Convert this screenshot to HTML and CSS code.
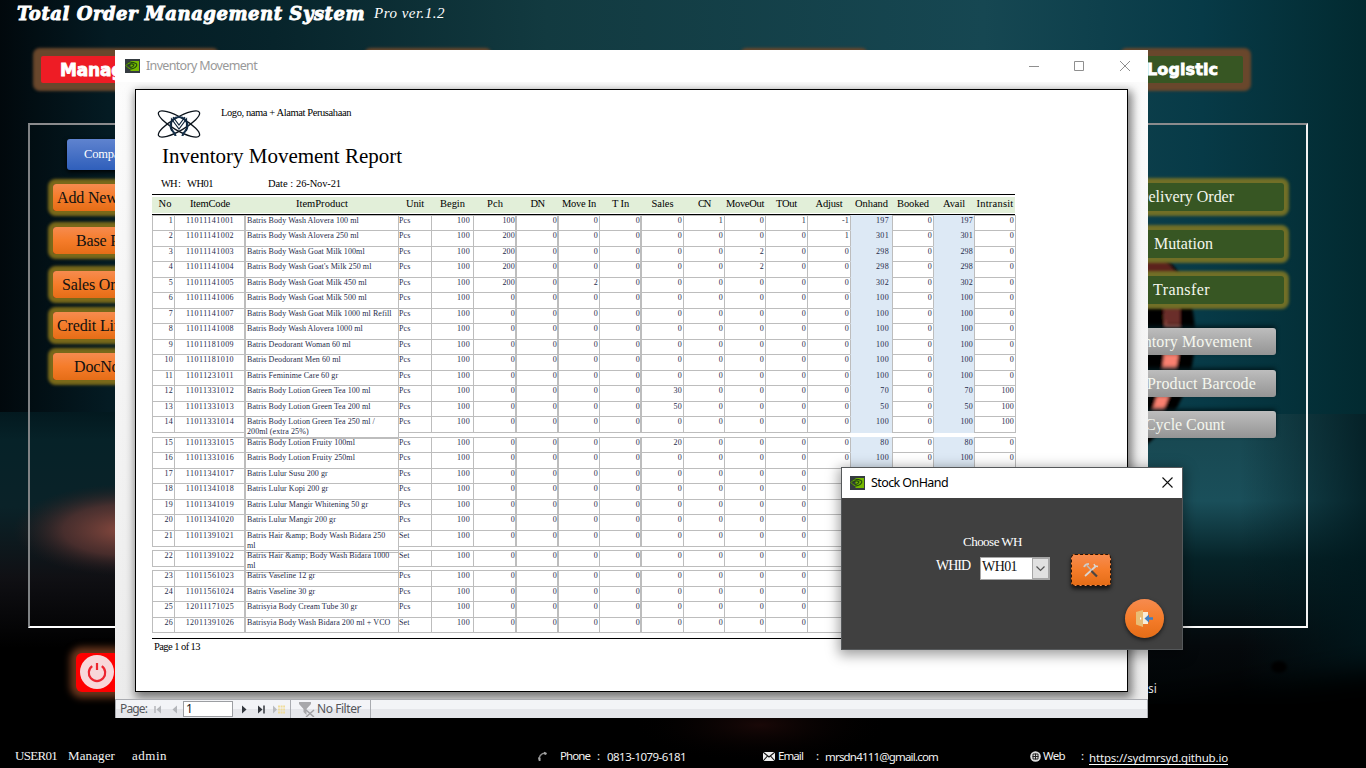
FILE: index.html
```html
<!DOCTYPE html>
<html lang="en">
<head>
<meta charset="utf-8">
<title>Total Order Management System</title>
<link rel="stylesheet" href="styles.css">
</head>
<body>
<div class="desktop">
  <svg class="backdrop" width="1366" height="768" viewBox="0 0 1366 768">
    <defs>
      <linearGradient id="sky" x1="0" x2="1" y1="0" y2="0">
        <stop offset="0" stop-color="#01080c"/><stop offset=".08" stop-color="#041b23"/><stop offset=".2" stop-color="#07242b"/>
        <stop offset=".4" stop-color="#123a40"/><stop offset=".72" stop-color="#164752"/><stop offset=".88" stop-color="#073a47"/>
        <stop offset="1" stop-color="#022a30"/>
      </linearGradient>
      <linearGradient id="leftFloor" x1="0" x2="0" y1="0" y2="1">
        <stop offset="0" stop-color="#03191f"/><stop offset=".12" stop-color="#062228"/><stop offset=".4" stop-color="#0a2228"/><stop offset=".7" stop-color="#101014"/><stop offset="1" stop-color="#000"/>
      </linearGradient>
      <linearGradient id="rightFloor" x1="0" x2="0" y1="0" y2="1">
        <stop offset="0" stop-color="#17464f"/><stop offset=".3" stop-color="#1a4f5a"/><stop offset=".5" stop-color="#062328"/><stop offset=".8" stop-color="#05090c"/><stop offset="1" stop-color="#000304"/>
      </linearGradient>
      <linearGradient id="rightEdge" x1="0" x2="1" y1="0" y2="0">
        <stop offset="0" stop-color="#00181d" stop-opacity="0"/><stop offset="1" stop-color="#00181d" stop-opacity=".8"/>
      </linearGradient>
      <radialGradient id="ember"><stop offset="0" stop-color="#8a4a3f"/><stop offset=".55" stop-color="#5b3431" stop-opacity=".75"/><stop offset="1" stop-color="#2a1c1e" stop-opacity="0"/></radialGradient>
      <radialGradient id="glow"><stop offset="0" stop-color="#190807"/><stop offset="1" stop-color="#000" stop-opacity="0"/></radialGradient>
      <filter id="soft"><feGaussianBlur stdDeviation="1.6"/></filter>
      <filter id="haze" x="-20%" y="-60%" width="140%" height="220%"><feGaussianBlur stdDeviation="14"/></filter>
    </defs>
    <rect width="1366" height="768" fill="#000"/>
    <rect width="1366" height="420" fill="url(#sky)"/>
    <rect y="412" width="700" height="236" fill="url(#leftFloor)"/>
    <rect x="700" y="414" width="666" height="290" fill="url(#rightFloor)"/>
    <ellipse cx="125" cy="530" rx="112" ry="46" fill="url(#ember)"/>
    <rect x="1240" y="414" width="126" height="290" fill="url(#rightEdge)"/>
    <path d="M1080 715L1400 665V800H1080z" fill="#000" filter="url(#haze)"/>
    <ellipse cx="760" cy="725" rx="130" ry="38" fill="url(#glow)"/>
    <ellipse cx="1279" cy="667" rx="8" ry="6" fill="#000" filter="url(#soft)"/>
    <g filter="url(#soft)">
      <path d="M1140 250C1180 250 1195 300 1195 335C1195 390 1168 430 1140 450z" fill="#030506"/>
      <path d="M1140 254C1158 252 1172 262 1180 282L1140 282z" fill="#5b241d"/>
      <path d="M1163 300L1178 300Q1186 358 1163 412L1152 412Q1170 358 1163 300z" fill="#f9806f"/>
      <path d="M1162 298L1180 298L1180 326L1166 326z" fill="#6b2f2a"/>
    </g>
  </svg>

  <header class="brand">
    <h1 class="brand-name" data-w="348">Total Order Management System</h1>
    <span class="brand-ver" data-w="71">Pro ver.1.2</span>
  </header>

  <nav class="tabs">
    <span class="tab tab-red">Manage</span>
    <span class="tab tab-hidden"></span>
    <span class="tab tab-hidden"></span>
    <span class="tab tab-green">Logistic</span>
  </nav>

  <main class="frame">
    <div class="col-left">
      <span class="btn btn-blue">Company</span>
      <span class="btn btn-orange pl4">Add New Item</span>
      <span class="btn btn-orange pl22">Base Price</span>
      <span class="btn btn-orange pl9 gap17">Sales Order</span>
      <span class="btn btn-orange pl4 gap12">Credit Limit</span>
      <span class="btn btn-orange pl20">DocNo</span>
    </div>
    <div class="col-right">
      <span class="btn btn-green"><span data-w="97">Delivery Order</span></span>
      <span class="btn btn-green pr71"><span data-w="59">Mutation</span></span>
      <span class="btn btn-green pr74"><span data-w="57">Transfer</span></span>
      <span class="btn btn-gray first"><span data-w="137">Inventory Movement</span></span>
      <span class="btn btn-gray pr20"><span data-w="145">Print Product Barcode</span></span>
      <span class="btn btn-gray pr51"><span data-w="80">Cycle Count</span></span>
    </div>
  </main>

  <section class="strip">
    <span class="power">
      <svg width="36" height="36" viewBox="0 0 36 36"><circle cx="18" cy="18" r="17" fill="#f8d7da"/><path d="M13.2 12.2a8.2 8.2 0 1 0 9.6 0M18 9v7" fill="none" stroke="#ed2530" stroke-width="2.2"/></svg>
    </span>
    <span class="version">si</span>
  </section>

  <footer class="status">
    <span class="user" data-w="42">USER01</span><span class="user" data-w="47">Manager</span><span class="user" data-w="35">admin</span>
    <svg width="11" height="11" viewBox="0 0 11 11"><path d="M2.5 10C1 6 4 2 8.5 2" fill="none" stroke="#8d8d8d" stroke-width="1.4"/><path d="M7 .8l3 1.2-1 2-2.2-.8zM1 6.5l2.6.3L3.5 10H2z" fill="#a5a5a5"/></svg>
    <span data-w="30">Phone</span><span>:</span><span class="low" data-w="79">0813-1079-6181</span>
    <svg width="12" height="9" viewBox="0 0 12 9"><path d="M0 0h12v9H0z" fill="#eee"/><path d="M0 0l6 5 6-5M0 9l4.5-5M12 9L7.5 4" fill="none" stroke="#111" stroke-width="1.1"/></svg>
    <span data-w="25">Email</span><span>:</span><span class="low" data-w="113">mrsdn4111@gmail.com</span>
    <svg width="11" height="11" viewBox="0 0 11 11"><circle cx="5.5" cy="5.5" r="5.3" fill="#ddd"/><path d="M3 3h5v5H3zM5.5 2.5v6M2.5 5.5h6" fill="none" stroke="#222" stroke-width="1"/></svg>
    <span data-w="22">Web</span><span>:</span><span class="low link" data-w="139">https://sydmrsyd.github.io</span>
  </footer>

  <section class="window report-window">
    <div class="titlebar">
      <svg class="app-icon" width="15" height="14" viewBox="0 0 15 14"><rect width="15" height="14" fill="#353b40"/><rect x="5.5" y="2" width="8.5" height="10" fill="#76b900"/><path d="M1 6.5Q4.500 1.500 11 4.500Q13 6 10 8.500Q5 12 1 6.500M3.500 6.500Q6 3.500 9 6Q7.500 9 5 8.200" fill="none" stroke="#244d0c" stroke-width="1.1"/><path d="M1 6.500Q2.500 4 5.500 3.700M1 6.500Q2.500 9 5.500 9.800" fill="none" stroke="#6aa80a" stroke-width="1"/></svg>
      <span class="title dim" data-w="111">Inventory Movement</span>
      <svg class="controls" width="104" height="12" viewBox="0 0 104 12"><path d="M0 6.500h10M45.500 1.500h9v9h-9zM91 1l10 10M101 1L91 11" fill="none" stroke="#8f8f8f" stroke-width="1"/></svg>
    </div>
    <div class="viewer">
      <article class="page">
        <div class="letterhead">
          <svg width="44" height="28" viewBox="0 0 44 28" fill="none" stroke="#0c141c">
            <ellipse cx="22" cy="14" rx="23.500" ry="6.500" transform="rotate(30 22 14)" stroke-width="1.300"/>
            <ellipse cx="22" cy="14" rx="23.500" ry="6.500" transform="rotate(-30 22 14)" stroke-width="1.300"/>
            <path d="M18.500 26q0-2.500-2.500-4.500a8.500 8.500 0 1 1 12 0Q25.500 23.500 25.500 26" stroke="#17324c" stroke-width="2.200"/>
            <path d="M14.500 21V9l7.500 10 7.500-10v12M16 7l6 8 6-8" stroke="#10263c" stroke-width="1.200"/>
          </svg>
          <span data-w="130">Logo, nama + Alamat Perusahaan</span>
        </div>
        <h2 class="report-title" data-w="240">Inventory Movement Report</h2>
        <div class="meta"><span data-w="19">WH :</span><span data-w="26">WH01</span><span data-w="25">Date :</span><span data-w="45">26-Nov-21</span></div>
        <div class="grid head" id="head"></div>
        <div class="rows" id="rows"></div>
        <div class="page-foot"><span data-w="46">Page 1 of 13</span></div>
      </article>
    </div>
    <div class="navbar">
      <span class="nav-label" data-w="27">Page:</span>
      <svg width="26" height="9" viewBox="0 0 26 9"><path d="M1 1v7" stroke="#b4b6ba" stroke-width="1.500"/><path d="M7 .5v8L2.500 4.500zM23 .5v8l-4.500-4z" fill="#b4b6ba"/></svg>
      <span class="nav-input">1</span>
      <svg class="fwd" width="46" height="9" viewBox="0 0 46 9"><path d="M1 .5v8l4.500-4zM17 .5v8l4.500-4z" fill="#33373d"/><path d="M23 .5v8" stroke="#33373d" stroke-width="1.500"/><path d="M32 .5v8l4-4z" fill="#b9bbbf"/><path d="M37 1.500h7M37 4.500h7M37 7.500h7" stroke="#f0dc9a" stroke-width="1.800" stroke-dasharray="2 .6"/></svg>
      <span class="filter">
        <svg width="16" height="15" viewBox="0 0 16 15"><path d="M0 0h12v2L7.500 7v6L4.500 10V7L0 2z" fill="#a8a8ab"/><path d="M7 8l8 7M15 8l-8 7" stroke="#a0a0a4" stroke-width="1.500"/></svg>
        <span data-w="44">No Filter</span>
      </span>
    </div>
  </section>

  <section class="window dialog">
    <div class="titlebar">
      <svg class="app-icon" width="15" height="14" viewBox="0 0 15 14"><rect width="15" height="14" fill="#353b40"/><rect x="5.500" y="2" width="8.500" height="10" fill="#76b900"/><path d="M1 6.500Q4.500 1.500 11 4.500Q13 6 10 8.500Q5 12 1 6.500M3.500 6.500Q6 3.500 9 6Q7.500 9 5 8.200" fill="none" stroke="#244d0c" stroke-width="1.100"/><path d="M1 6.500Q2.500 4 5.500 3.700M1 6.500Q2.500 9 5.500 9.800" fill="none" stroke="#6aa80a" stroke-width="1"/></svg>
      <span class="title" data-w="77">Stock OnHand</span>
      <svg class="close" width="11" height="11" viewBox="0 0 11 11"><path d="M.5.5l10 10M10.500.5l-10 10" stroke="#111" stroke-width="1.100"/></svg>
    </div>
    <div class="dialog-body">
      <div class="choose"><span data-w="59">Choose WH</span></div>
      <div class="field">
        <span class="whid" data-w="34">WHID</span>
        <span class="combo"><span class="combo-text" data-w="35">WH01</span><span class="combo-arrow"><svg width="9" height="6" viewBox="0 0 9 6"><path d="M.5.5l4 4 4-4" fill="none" stroke="#555" stroke-width="1.200"/></svg></span></span>
        <span class="tool">
          <svg width="16" height="16" viewBox="0 0 16 16"><path d="M2 14L13 4" stroke="#d9d5d2" stroke-width="1.700"/><path d="M11 2l1 2 3 .5" stroke="#d9d5d2" stroke-width="1.500" fill="none"/><path d="M4 3.500l5 5.500" stroke="#bdb9b6" stroke-width="1.500"/><path d="M8.500 9l5.500 5.500" stroke="#4b4542" stroke-width="2.200"/><path d="M1 5Q2 2 6 1.800" stroke="#cfcac6" stroke-width="1.800" fill="none"/></svg>
        </span>
      </div>
      <div class="exit-row"><span class="exit">
        <svg width="18" height="17" viewBox="0 0 18 17"><path d="M6 2h6v12H6z" fill="#f7ecd8"/><path d="M0 2l7-2v17l-7-2.500z" fill="#e9bd76"/><path d="M4 7.500h1.200v2H4z" fill="#fff"/><path d="M8.500 8.500l4.500-4v2.700h4v2.600h-4v2.700z" fill="#3f7fc4"/></svg>
      </span></div>
    </div>
  </section>
</div>
<script src="report.js"></script>
</body>
</html>
```
FILE: styles.css
```css
* { box-sizing: border-box; }
body { margin: 0; background: #000; overflow: hidden; font-family: "Liberation Serif", serif; }
.desktop { position: relative; width: 1366px; height: 768px; overflow: hidden; display: flex; flex-direction: column; white-space: nowrap; }
.desktop > * { flex: none; }
.backdrop { position: absolute; inset: 0; }
.brand, .tabs, .frame, .strip, .status { position: relative; }

.brand { height: 46px; padding: 3px 0 0 17px; display: flex; align-items: flex-start; color: #fff; }
.brand-name { margin: 0; width: 357px; font: italic bold 18px/21px "DejaVu Serif", serif; -webkit-text-stroke: .9px #fff; }
.brand-ver { font: italic 15px/21px "Liberation Serif", serif; }

.tabs { height: 46px; padding: 10px 0 0 41px; display: flex; align-items: flex-start; }
.tab { height: 27px; color: #fff; font: bold 17px/28px "DejaVu Sans", sans-serif; letter-spacing: -.2px; -webkit-text-stroke: .8px #fff; box-shadow: 0 0 3px 8px #69472c; border-radius: 2px; }
.tab-red { width: 170px; padding-left: 19px; background: #ee1c25; }
.tab-hidden { width: 112px; margin-left: 161px; background: #375623; }
.tab-hidden + .tab-hidden { margin-left: 264px; }
.tab-green { width: 115px; margin-left: 268px; padding-left: 19px; background: #375623; font-size: 16px; letter-spacing: .1px; }

.frame { height: 505px; width: 1280px; margin: 31px 0 0 28px; border: 2px solid; border-color: #8b8b8d #f3f3f3 #fff #7f8284; display: flex; justify-content: space-between; }
.btn { display: block; height: 28px; border-radius: 3px; }
.col-left { width: 160px; padding: 14px 0 0 23px; font-size: 16px; letter-spacing: -.15px; line-height: 27px; color: #111; }
.btn-blue { height: 31px; width: 130px; margin: 0 0 14px 14px; padding-left: 17px; font-size: 12.500px; line-height: 31px; color: #fff; background: linear-gradient(#5f83cf, #2f5fbb); box-shadow: 0 2px 5px #000; }
.btn-orange { width: 130px; margin-bottom: 16px; background: linear-gradient(#f68b4f, #f57c2a 50%, #e56d17); box-shadow: 0 0 3px 5px #79691a; height: 27px; }
.pl4 { padding-left: 4px; } .pl9 { padding-left: 9px; } .pl20 { padding-left: 21px; } .pl22 { padding-left: 23px; }
.gap17 { margin-top: 17px; } .gap12 { margin-top: -2px; }
.btn-orange:last-child { margin-top: -2px; }
.col-right { width: 201px; margin-right: 22px; padding-top: 58px; font-size: 16px; line-height: 27px; color: #f4f6ee; text-align: right; }
.btn-green { margin-bottom: 18.500px; padding-right: 50px; background: #375623; box-shadow: 0 0 3px 5px #716f27; }
.btn-gray { width: 185px; height: 27px; margin: 0 0 14.500px 8px; padding-right: 24px; line-height: 28px; background: linear-gradient(#bdbdbd, #949494); box-shadow: 0 -2px 4px #02181d; }
.btn-gray.first { margin-top: 24px; }
.btn.pr71 { padding-right: 71px; } .btn.pr74 { padding-right: 74px; } .btn.pr20 { padding-right: 20px; } .btn.pr51 { padding-right: 51px; }

.strip { height: 110px; padding: 25px 0 0 76px; display: flex; align-items: flex-start; }
.power { width: 44px; height: 39px; padding: 1px 0 0 3px; border-radius: 6px; background: #fe0000; box-shadow: 0 0 7px 6px #69361c; }
.version { margin: 28px 0 0 1028px; font: 12px/16px "Noto Sans", sans-serif; color: #ddd; }

.status { height: 40px; padding-left: 15px; display: grid; align-items: center; grid-template-columns: 53px 64px 405px 23px 37px 10px 156px 15px 38px 9px 205px 13px 38px 8px 150px; font: 11.500px/16px "Noto Sans", sans-serif; color: #f2f2f2; }
.status > * { margin-bottom: 4px; }
.user { font: 13px/16px "Liberation Serif", serif; }
.status .low { margin-bottom: 2px; }
.status .link { justify-self: start; border-bottom: 1px solid #fff; line-height: 13px; margin-bottom: 0; }

.window { position: absolute; display: flex; flex-direction: column; }
.report-window { left: 115px; top: 50px; width: 1033px; height: 668px; background: #fff; }
.titlebar { display: flex; align-items: center; background: #fff; font: 12.500px/16px "Noto Sans", sans-serif; color: #000; }
.report-window .titlebar { height: 32px; padding: 0 0 1px 10px; }
.app-icon { margin-right: 6px; }
.title { width: 120px; }
.dim { color: #999; }
.controls { margin-left: 763px; }
.viewer { height: 617px; padding: 7px 0 0 20px; background: linear-gradient(#fcfcfc, #ececec); overflow: hidden; }
.page { width: 993px; height: 603px; border: 1px solid #000; background: #fff; padding-left: 16px; box-shadow: 2px 4px 9px 2px rgba(0,0,0,.5); color: #000; }
.letterhead { height: 53px; padding: 20px 0 0 5px; display: flex; align-items: flex-start; font-size: 10.500px; }
.letterhead span { margin: -3px 0 0 20px; line-height: 12px; }
.report-title { margin: 0 0 0 10px; height: 32px; font-size: 21px; line-height: 27px; font-weight: normal; }
.meta { height: 20px; padding-left: 9px; display: grid; grid-template-columns: 26px 81px 28px 60px; font-size: 10.500px; line-height: 17px; }
.grid { display: grid; grid-template-columns: 22px 71px 153px 33px 42px 43px 42px 41px 42px 42px 41px 41px 42px 43px 42px 41px 41px 41px; width: 863px; }
.head { margin-top: -1px; width: 863px; height: 21px; padding-top: 2px; border-top: 1px solid #000; border-bottom: 1px solid #000; }
.head span { height: 16px; background: #e2efd9; font-size: 10.500px; line-height: 14px; display: flex; justify-content: center; padding-left: 1px; }
.head span:first-child { padding-left: 4px; }
.rows { font-size: 8px; line-height: 10px; color: #262b4a; }
.rows .c { height: calc(100% + 1px); margin-right: -1px; border: 1px solid #bdbdbd; padding: 0 1px; text-align: right; letter-spacing: .2px; }
.rows .tall .c { height: 17px; }
.rows .tall .c.name { height: calc(100% + 1px); }
.rows .c.code { text-align: center; padding: 0; letter-spacing: .45px; }
.rows .c.name { text-align: left; padding: 0 0 0 1px; letter-spacing: .07px; border-left-width: 2px; margin-left: -1px; white-space: pre; }
.rows .c.unit { text-align: left; padding-left: 0; letter-spacing: .1px; }
.rows .c.wide { border-left-width: 2px; margin-left: -1px; }
.rows .c.in { padding-right: 3px; letter-spacing: .35px; }
.rows .c.blue { background: #dde9f5; border-top-color: #dde9f5; border-bottom-color: #dde9f5; }
.page-foot { width: 863px; margin-top: 6px; padding: 1px 0 0 2px; border-top: 1px solid #000; font-size: 10.500px; line-height: 13px; }

.navbar { height: 19px; display: flex; align-items: center; border: 1px solid #a9abb0; border-bottom: 0; background: linear-gradient(#f3f4f7 50%, #e5e6ea 50%); font: 12px/16px "Noto Sans", sans-serif; color: #55565a; padding-left: 4px; }
.nav-label { width: 34px; }
.nav-input { width: 50px; height: 16px; margin-left: 3px; border: 1px solid #9c9ea2; background: #fff; padding-left: 2px; font-size: 12px; line-height: 14px; color: #222; }
.fwd { margin: 0 3px 0 8px; }
.filter { height: 18px; width: 81px; padding-left: 8px; border: solid #a9abb0; border-width: 0 1px; display: flex; align-items: center; gap: 2px; }

.dialog { left: 841px; top: 467px; width: 342px; height: 183px; border: 1px solid #55585a; background: #404040; box-shadow: 0 3px 12px 2px rgba(0,0,0,.38); }
.dialog .titlebar { height: 30px; padding: 0 0 1px 8px; }
.dialog .close { margin-left: 171px; }
.dialog-body { height: 151px; color: #fff; }
.choose { padding: 36px 0 0 121px; font-size: 13px; line-height: 16px; }
.field { height: 47px; padding: 2px 0 0 94px; display: flex; align-items: flex-start; font-size: 14px; }
.whid { width: 44px; margin-top: 5px; line-height: 18px; }
.combo { width: 70px; height: 23px; margin-top: 5px; border: 1px solid #a6a6a6; background: #fff; color: #111; display: flex; justify-content: space-between; }
.combo-text { padding-left: 1px; line-height: 17px; }
.combo-arrow { width: 17px; height: 21px; border: 1px solid #a6a6a6; background: #e1e1e1; display: grid; place-items: center; }
.tool { width: 40px; height: 32px; margin: 2px 0 0 21px; border-radius: 4px; border: 1px dashed #2b1305; background: linear-gradient(#f68b4f, #f57c2a 50%, #e56d17); box-shadow: 0 3px 4px rgba(0,0,0,.7); display: grid; place-items: center; }
.exit-row { display: flex; padding: 2px 0 0 283px; }
.exit { width: 39px; height: 39px; border-radius: 50%; background: linear-gradient(#f68b4f, #f57c2a 50%, #e56d17); box-shadow: 0 2px 4px rgba(0,0,0,.6); display: grid; place-items: center; }
```
FILE: report.js
```js
const columns = [["No", 13], ["ItemCode", 40], ["ItemProduct", 52], ["Unit", 18], ["Begin", 25], ["Pch", 16], ["DN", 14], ["Move In", 34],
  ["T In", 17], ["Sales", 22], ["CN", 12], ["MoveOut", 38], ["TOut", 21], ["Adjust", 27], ["Onhand", 33], ["Booked", 32], ["Avail", 22], ["Intransit", 37]];

// code, product, unit, row height, changed quantities by column index
const items = [
  ["11011141001", "Batris Body Wash Alovera 100 ml", "Pcs", 15, { 5: 100, 10: 1, 12: 1, 13: -1, 14: 197, 16: 197 }],
  ["11011141002", "Batris Body Wash Alovera 250 ml", "Pcs", 16, { 5: 200, 13: 1, 14: 301, 16: 301 }],
  ["11011141003", "Batris Body Wash Goat Milk 100ml", "Pcs", 15, { 5: 200, 11: 2, 14: 298, 16: 298 }],
  ["11011141004", "Batris Body Wash Goat's Milk 250 ml", "Pcs", 16, { 5: 200, 11: 2, 14: 298, 16: 298 }],
  ["11011141005", "Batris Body Wash Goat Milk 450 ml", "Pcs", 15, { 5: 200, 7: 2, 14: 302, 16: 302 }],
  ["11011141006", "Batris Body Wash Goat Milk 500 ml", "Pcs", 16, {}],
  ["11011141007", "Batris Body Wash Goat Milk 1000 ml Refill", "Pcs", 15, {}],
  ["11011141008", "Batris Body Wash Alovera 1000 ml", "Pcs", 16, {}],
  ["11011181009", "Batris Deodorant Woman 60 ml", "Pcs", 15, {}],
  ["11011181010", "Batris Deodorant Men 60 ml", "Pcs", 16, {}],
  ["11011231011", "Batris Feminime Care 60 gr", "Pcs", 15, {}],
  ["11011331012", "Batris Body Lotion Green Tea 100 ml", "Pcs", 16, { 9: 30, 14: 70, 16: 70, 17: 100 }],
  ["11011331013", "Batris Body Lotion Green Tea 200 ml", "Pcs", 15, { 9: 50, 14: 50, 16: 50, 17: 100 }],
  ["11011331014", "Batris Body Lotion Green Tea 250 ml /\n200ml (extra 25%)", "Pcs", 21, { 17: 100 }],
  ["11011331015", "Batris Body Lotion Fruity 100ml", "Pcs", 15, { 9: 20, 14: 80, 16: 80 }],
  ["11011331016", "Batris Body Lotion Fruity 250ml", "Pcs", 16, {}],
  ["11011341017", "Batris Lulur Susu 200 gr", "Pcs", 15, {}],
  ["11011341018", "Batris Lulur Kopi 200 gr", "Pcs", 16, {}],
  ["11011341019", "Batris Lulur Mangir Whitening 50 gr", "Pcs", 15, {}],
  ["11011341020", "Batris Lulur Mangir 200 gr", "Pcs", 16, {}],
  ["11011391021", "Batris Hair &amp; Body Wash Bidara 250\nml", "Set", 20, {}],
  ["11011391022", "Batris Hair &amp; Body Wash Bidara 1000\nml", "Set", 20, {}],
  ["11011561023", "Batris Vaseline 12 gr", "Pcs", 16, {}],
  ["11011561024", "Batris Vaseline 30 gr", "Pcs", 15, {}],
  ["12011171025", "Batrisyia Body Cream Tube 30 gr", "Pcs", 16, {}],
  ["12011391026", "Batrisyia Body Wash Bidara 200 ml + VCO", "Set", 15, {}]
];

const classes = { 1: "code", 2: "name", 3: "unit", 4: "in", 6: "wide", 7: "wide", 9: "wide", 14: "blue in", 16: "blue" };
const full = { 4: 100, 14: 100, 16: 100 };

const head = document.getElementById("head");
columns.forEach(([label, width]) => {
  const cell = document.createElement("span");
  const text = document.createElement("b");
  text.style.fontWeight = "normal";
  text.dataset.w = width;
  text.textContent = label;
  cell.append(text);
  head.append(cell);
});

const rows = document.getElementById("rows");
items.forEach(([code, name, unit, height, values], i) => {
  const row = document.createElement("div");
  row.className = "grid" + (height > 16 ? " tall" : "");
  row.style.height = height + "px";
  columns.forEach((_, c) => {
    const cell = document.createElement("span");
    cell.className = "c " + (classes[c] || "");
    cell.textContent = [i + 1, code, name, unit][c] ?? values[c] ?? full[c] ?? 0;
    row.append(cell);
  });
  rows.append(row);
});

// Track each label so it fills its designed width.
document.querySelectorAll("[data-w]").forEach(el => {
  const range = document.createRange();
  range.selectNodeContents(el);
  const natural = range.getBoundingClientRect().width;
  el.style.letterSpacing = (el.dataset.w - natural) / el.textContent.length + "px";
});
```
